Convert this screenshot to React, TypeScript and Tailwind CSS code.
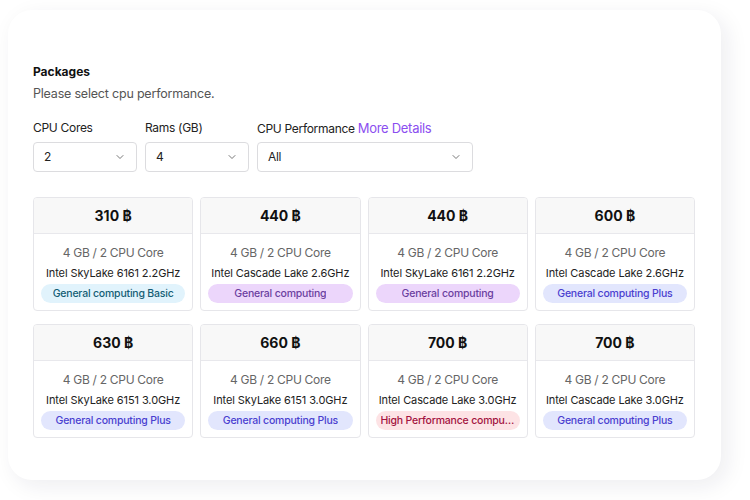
import React from 'react';
import { ChevronDown } from 'lucide-react';

type Tier = 'basic' | 'general' | 'plus' | 'high';

interface Pkg {
  price: number;
  spec: string;
  cpu: string;
  tier: Tier;
}

const packages: Pkg[] = [
  { price: 310, spec: '4 GB / 2 CPU Core', cpu: 'Intel SkyLake 6161 2.2GHz', tier: 'basic' },
  { price: 440, spec: '4 GB / 2 CPU Core', cpu: 'Intel Cascade Lake 2.6GHz', tier: 'general' },
  { price: 440, spec: '4 GB / 2 CPU Core', cpu: 'Intel SkyLake 6161 2.2GHz', tier: 'general' },
  { price: 600, spec: '4 GB / 2 CPU Core', cpu: 'Intel Cascade Lake 2.6GHz', tier: 'plus' },
  { price: 630, spec: '4 GB / 2 CPU Core', cpu: 'Intel SkyLake 6151 3.0GHz', tier: 'plus' },
  { price: 660, spec: '4 GB / 2 CPU Core', cpu: 'Intel SkyLake 6151 3.0GHz', tier: 'plus' },
  { price: 700, spec: '4 GB / 2 CPU Core', cpu: 'Intel Cascade Lake 3.0GHz', tier: 'high' },
  { price: 700, spec: '4 GB / 2 CPU Core', cpu: 'Intel Cascade Lake 3.0GHz', tier: 'plus' },
];

const tierLabel: Record<Tier, string> = {
  basic: 'General computing Basic',
  general: 'General computing',
  plus: 'General computing Plus',
  high: 'High Performance computing',
};

const tierStyle: Record<Tier, string> = {
  basic: 'bg-[#e1f3fc] text-[#155e75]',
  general: 'bg-[#ecd6fb] text-[#6b3fa0]',
  plus: 'bg-[#e2e6fd] text-[#4a3fd0]',
  high: 'bg-[#fde3e5] text-[#a3133f]',
};

const Select: React.FC<{ value: string; width: string }> = ({ value, width }) => (
  <div
    className={`${width} h-[30px] flex items-center justify-between pl-[10px] pr-[10px] border border-[#dcdcdf] rounded-[4px] bg-white text-[12px] text-[#222]`}
  >
    <span>{value}</span>
    <ChevronDown size={12} strokeWidth={1.6} className="text-[#555]" />
  </div>
);

const PackageCard: React.FC<{ pkg: Pkg }> = ({ pkg }) => (
  <div className="border border-[#e6e6ea] rounded-[4px] overflow-hidden bg-white">
    <div className="h-[36px] flex items-center justify-center bg-[#f8f8f8] border-b border-[#e8e8ec] text-[14px] font-bold text-[#111]">
      {pkg.price} ฿
    </div>
    <div className="flex flex-col items-center px-[7px] pt-[11px] pb-[7px]">
      <div className="text-[12px] leading-[16px] tracking-[-0.3px] text-[#666]">{pkg.spec}</div>
      <div className="mt-[5px] text-[11px] leading-[15px] tracking-[-0.1px] text-[#222]">{pkg.cpu}</div>
      <div
        className={`mt-[3px] w-full h-[19px] rounded-full flex items-center justify-center px-[5px] text-[10.5px] tracking-[-0.2px] font-medium ${tierStyle[pkg.tier]}`}
      >
        <span className="truncate">{tierLabel[pkg.tier]}</span>
      </div>
    </div>
  </div>
);

export default function App() {
  return (
    <div
      className="w-[750px] h-[500px] bg-white pt-[10px] pl-[8px]"
      style={{ fontFamily: 'Inter, "Noto Sans", "DejaVu Sans", sans-serif' }}
    >
      <div className="w-[713px] h-[470px] bg-white rounded-[24px] shadow-[6px_6px_22px_rgba(20,20,60,0.08)] pl-[25px] pr-[26px] pt-[54px]">
        <div className="text-[12px] font-bold text-[#111] leading-[16px]">Packages</div>
        <div className="mt-[6px] text-[12.5px] tracking-[-0.2px] text-[#555] leading-[16px]">
          Please select cpu performance.
        </div>

        <div className="mt-[15px] flex gap-[8px] tracking-[-0.3px]">
          <div className="flex flex-col">
            <div className="h-[22px] flex items-center text-[12px] text-[#222]">CPU Cores</div>
            <div className="mt-[3px]">
              <Select value="2" width="w-[104px]" />
            </div>
          </div>
          <div className="flex flex-col">
            <div className="h-[22px] flex items-center text-[12px] text-[#222]">Rams (GB)</div>
            <div className="mt-[3px]">
              <Select value="4" width="w-[104px]" />
            </div>
          </div>
          <div className="flex flex-col">
            <div className="h-[22px] flex items-end pb-[1px] text-[12px] text-[#222]">
              CPU Performance&nbsp;<span className="text-[13px] text-[#8b4ef0]">More Details</span>
            </div>
            <div className="mt-[3px]">
              <Select value="All" width="w-[216px]" />
            </div>
          </div>
        </div>

        <div className="mt-[25px] grid grid-cols-4 gap-x-[7px] gap-y-[13px]">
          {packages.map((p, i) => (
            <PackageCard key={i} pkg={p} />
          ))}
        </div>
      </div>
    </div>
  );
}
